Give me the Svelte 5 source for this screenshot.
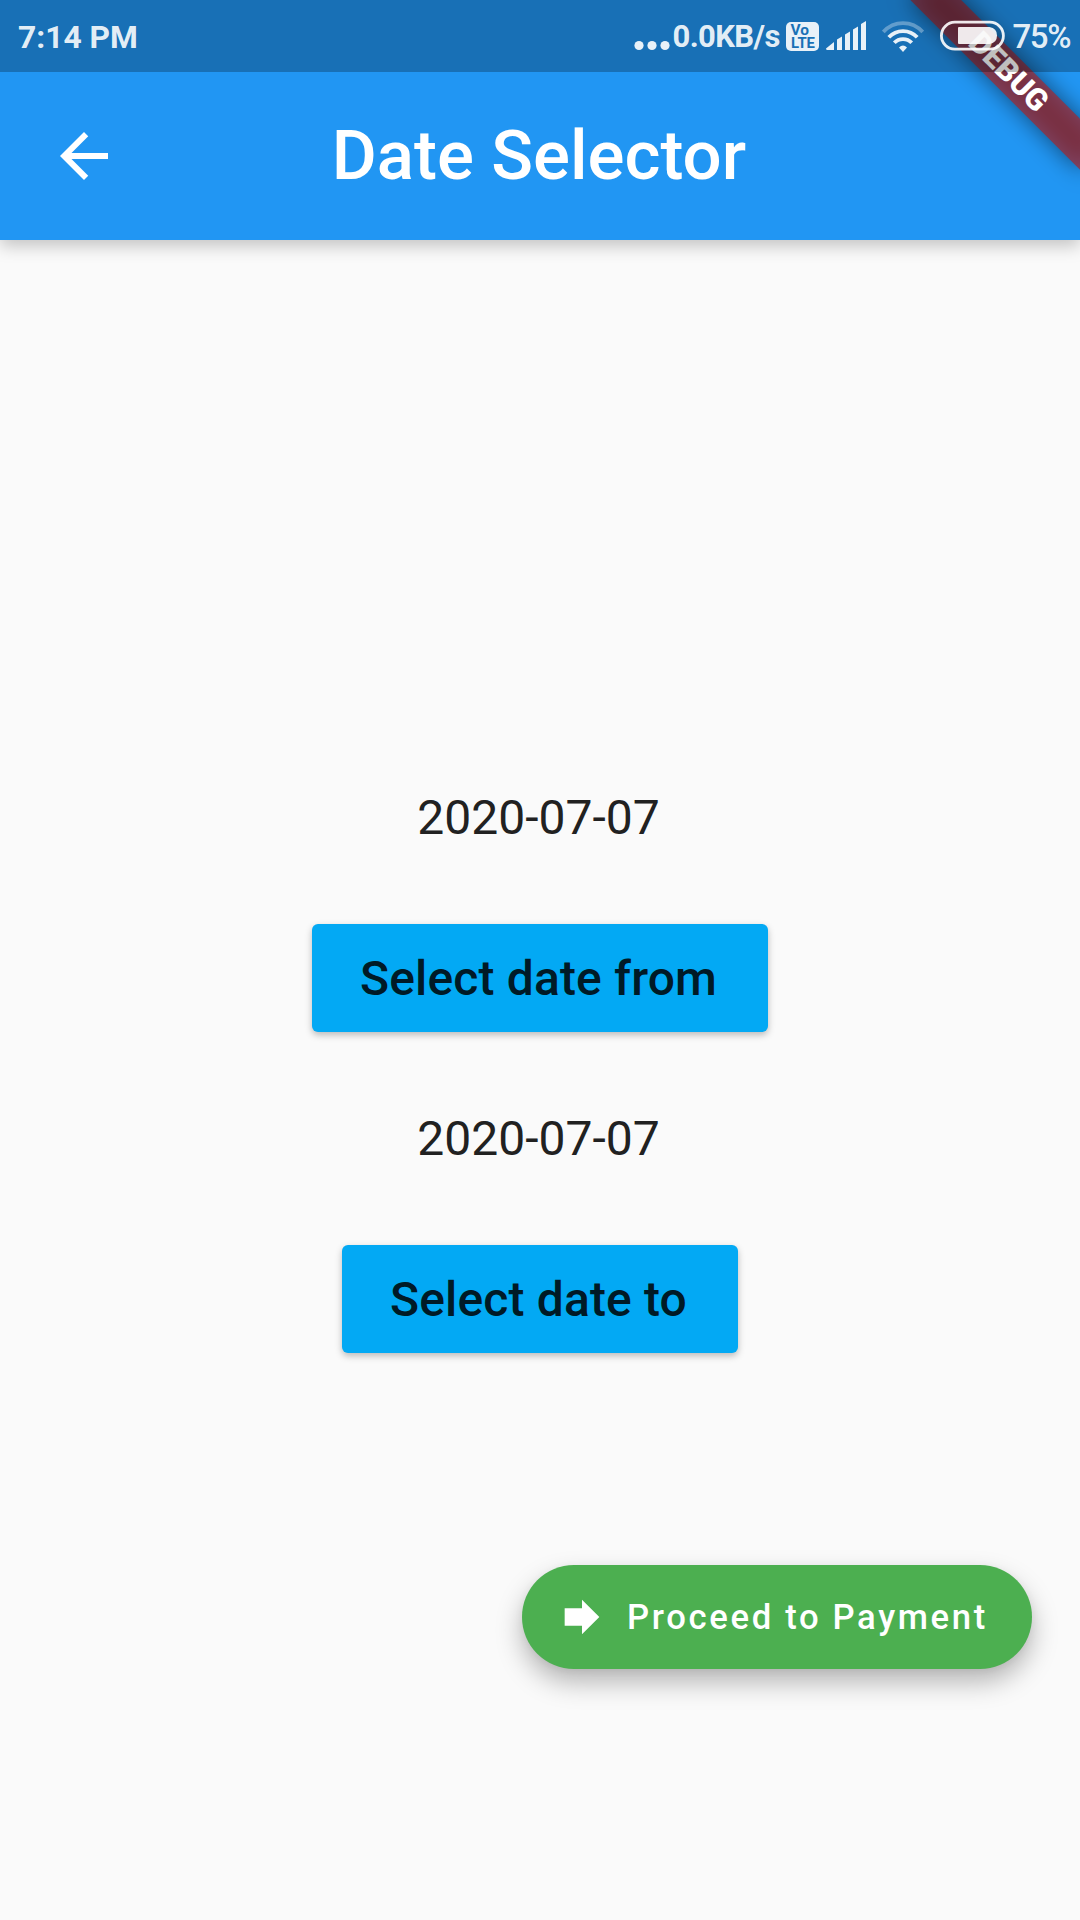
<script>
  let dateFrom = $state('2020-07-07');
  let dateTo = $state('2020-07-07');
</script>

<div class="screen">
  <header class="appbar">
    <div class="toolbar">
      <button class="back" aria-label="Back">
        <svg width="72" height="72" viewBox="0 0 24 24" fill="#fff">
          <path d="M20 11H7.83l5.59-5.59L12 4l-8 8 8 8 1.41-1.41L7.83 13H20v-2z" />
        </svg>
      </button>
      <h1>Date Selector</h1>
    </div>
  </header>

  <main>
    <p>{dateFrom}</p>
    <button class="pick">Select date from</button>
    <p>{dateTo}</p>
    <button class="pick">Select date to</button>
  </main>

  <button class="fab">
    <svg width="52" height="52" viewBox="0 0 24 24" fill="#fff">
      <path d="M12 8V4l8 8-8 8v-4H4V8z" />
    </svg>
    <span>Proceed to Payment</span>
  </button>

  <!-- debug ribbon across the top right corner -->
  <svg class="ribbon" width="280" height="280" viewBox="0 0 280 280">
    <defs>
      <filter id="soft" x="-30%" y="-150%" width="160%" height="400%">
        <feGaussianBlur stdDeviation="11.5" />
      </filter>
    </defs>
    <g transform="translate(280 0) rotate(45)">
      <rect x="-120" y="84" width="240" height="36" fill="#000" fill-opacity=".5" filter="url(#soft)" />
      <rect x="-122" y="84" width="244" height="36" fill="#b71c1c" fill-opacity=".627" />
      <text x="0.5" y="111.5" text-anchor="middle">DEBUG</text>
    </g>
  </svg>

  <div class="status">
    <span class="time">7:14 PM</span>
    <svg class="dots" width="36" height="72" viewBox="0 0 36 72">
      <circle cx="5" cy="45.5" r="4.6" />
      <circle cx="18" cy="45.5" r="4.6" />
      <circle cx="31" cy="45.5" r="4.6" />
    </svg>
    <span class="speed">0.0KB/s</span>
    <svg class="volte" width="33" height="72" viewBox="0 0 33 72">
      <rect y="22" width="33" height="29" rx="5" />
      <text x="4.5" y="34.5" textLength="18.5" lengthAdjust="spacingAndGlyphs">Vo</text>
      <text x="5" y="47.5" textLength="24" lengthAdjust="spacingAndGlyphs">LTE</text>
    </svg>
    <svg class="signal" width="41" height="72" viewBox="0 0 41 72">
      <path d="M1 50Q0 50 0 48.600L8 42V50ZM11 50V39.500L16 36.500V50ZM19 50V34.500L24 31.500V50ZM27 50V29.500L32 26.500V50ZM35 50V24L40 21V50Z" />
    </svg>
    <svg class="wifi" width="42" height="72" viewBox="0 0 42 72">
      <g class="arcs">
        <path d="M1.300 32C12 20.200 30 20.200 40.700 32" stroke-opacity=".35" />
        <path d="M6.800 37.300C14.500 29 27.500 29 35.200 37.300" />
        <path d="M12.300 42.800C17 37.800 25 37.800 29.700 42.800" />
      </g>
      <path d="M17 47.500Q21 43.700 25 47.500L21 52Z" />
    </svg>
    <svg class="battery" width="65" height="72" viewBox="0 0 65 72">
      <rect class="shell" x="1.400" y="22.200" width="62" height="27" rx="13.500" />
      <path d="M19 27H49.500Q57 28 57 35.500T49.500 44H19Q18 44 18 43V28Q18 27 19 27Z" />
    </svg>
    <span class="percent">75%</span>
  </div>
</div>

<style>
  :global(body) {
    margin: 0;
  }
  .screen {
    position: relative;
    display: flex;
    flex-direction: column;
    width: 1080px;
    height: 1920px;
    overflow: hidden;
    background: #fafafa;
    font-family: Roboto, sans-serif;
  }
  button {
    border: 0;
    padding: 0;
    font-family: inherit;
  }
  .appbar {
    box-sizing: border-box;
    height: 240px;
    padding-top: 72px;
    background: #2196f3;
    box-shadow: 0 6px 16px rgba(0, 0, 0, 0.22);
  }
  .toolbar {
    display: grid;
    grid-template-columns: 168px 1fr 170px;
    align-items: center;
    height: 168px;
  }
  .back {
    display: flex;
    justify-content: center;
    background: none;
  }
  h1 {
    margin: 0 0 2px;
    text-align: center;
    color: #fff;
    font-size: 69px;
    font-weight: 500;
    line-height: 81px;
    white-space: nowrap;
  }
  main {
    display: flex;
    flex: 1;
    flex-direction: column;
    align-items: center;
    justify-content: center;
  }
  p {
    margin: 0 0 60px;
    padding-right: 3px;
    color: #212121;
    font-size: 48px;
    line-height: 57px;
  }
  .pick {
    height: 108px;
    margin: 18px 0;
    padding: 0 51px 0 48px;
    border-radius: 6px;
    background: #03a9f4;
    color: #001a26;
    font-size: 48px;
    font-weight: 500;
    letter-spacing: 0.15px;
    box-shadow: 0 3px 7px rgba(0, 0, 0, 0.26);
  }
  .pick + p {
    margin-top: 60px;
  }
  .fab {
    position: absolute;
    left: 522px;
    top: 1565px;
    display: flex;
    align-items: center;
    box-sizing: border-box;
    width: 510px;
    height: 104px;
    padding-left: 34.4px;
    gap: 18.600px;
    border-radius: 52px;
    background: #4caf50;
    color: #fff;
    font-size: 34.67px;
    font-weight: 500;
    letter-spacing: 2.65px;
    white-space: nowrap;
    box-shadow: 0 13px 27px rgba(0, 0, 0, 0.28), 0 2px 8px rgba(0, 0, 0, 0.05);
  }
  .ribbon {
    position: absolute;
    top: 0;
    right: 0;
  }
  .ribbon text {
    fill: #fff;
    font-size: 30.6px;
    font-weight: 900;
  }
  .status {
    position: absolute;
    inset: 0 0 auto;
    display: flex;
    box-sizing: border-box;
    height: 72px;
    padding-left: 18px;
    background: rgba(0, 0, 0, 0.25);
    color: rgba(255, 255, 255, 0.9);
    font-size: 31.8px;
    font-weight: 700;
    line-height: 74px;
    white-space: nowrap;
  }
  .status > * {
    flex: none;
  }
  .status svg {
    fill: currentColor;
  }
  .status .arcs,
  .status .shell {
    fill: none;
    stroke: currentColor;
  }
  .arcs {
    stroke-width: 3.8px;
  }
  .shell {
    stroke-width: 2.8px;
  }
  .time {
    width: 615.5px;
  }
  .speed {
    width: 113.5px;
    font-size: 31px;
    letter-spacing: -0.6px;
  }
  .status .volte text {
    fill: #1971b6;
    font-size: 14px;
    font-weight: 700;
  }
  .dots {
    margin-right: 3px;
  }
  .signal {
    margin-left: 7px;
  }
  .wifi {
    margin-left: 15px;
  }
  .battery {
    margin-left: 16px;
  }
  .percent {
    margin-left: 7.5px;
    font-size: 33px;
    font-weight: 500;
    letter-spacing: -1.4px;
  }
</style>
